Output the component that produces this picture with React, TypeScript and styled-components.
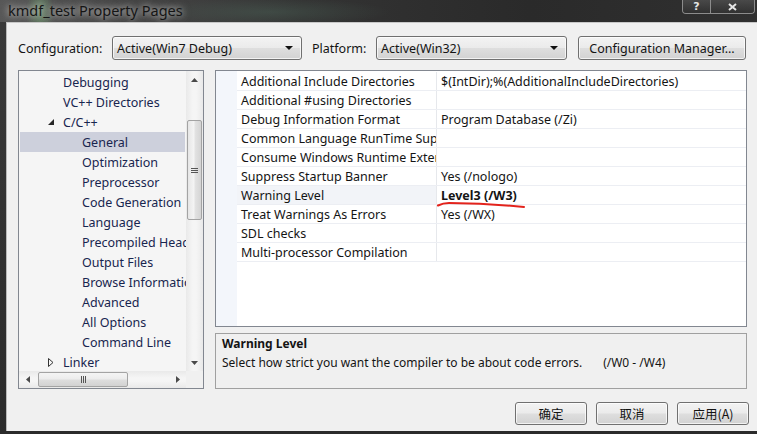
import styled, { createGlobalStyle } from "styled-components";

const GlobalStyle = createGlobalStyle`
  html, body {
    margin: 0;
    padding: 0;
    overflow: hidden;
    background: #2a2a2a;
  }
  body {
    font-family: "Noto Sans", "Noto Sans CJK SC", sans-serif;
    font-size: 12px;
  }
`;

const Window = styled.div`
  width: 757px;
  height: 434px;
  display: flex;
  flex-direction: column;
  background: linear-gradient(180deg, #3a3a3a, #2b2b2b);
  overflow: hidden;
`;

const TitleBar = styled.div`
  height: 22px;
  flex: none;
  display: flex;
  align-items: flex-start;
  justify-content: space-between;
  background:
    radial-gradient(ellipse 14px 30px at 40px 12px, rgba(120, 190, 120, 0.45), transparent),
    radial-gradient(ellipse 120px 14px at 270px 12px, rgba(80, 110, 95, 0.35), transparent),
    linear-gradient(90deg, #585858 0%, #454545 18%, #333 40%, #2a2a2a 70%, #303030 100%);
`;

const Title = styled.div`
  padding: 1px 0 0 8px;
  font-size: 14.5px;
  line-height: 19px;
  color: #151515;
  text-shadow: 0 0 6px rgba(220, 220, 220, 0.9), 0 0 10px rgba(200, 200, 200, 0.6);
`;

const CaptionButtons = styled.div`
  display: flex;
  margin-right: 2px;
  border: 1px solid #8c8c8c;
  border-top: none;
  border-radius: 0 0 4px 4px;
  overflow: hidden;
`;

const CaptionButton = styled.div<{ $w: number }>`
  width: ${({ $w }) => $w}px;
  height: 13px;
  display: flex;
  align-items: center;
  justify-content: center;
  background: linear-gradient(180deg, rgba(90, 90, 90, 0.6), rgba(50, 50, 50, 0.6));
  color: #e4e4e4;
  font-family: "DejaVu Sans", sans-serif;
  font-weight: bold;
  font-size: 11px;
  & + & {
    border-left: 1px solid #8c8c8c;
  }
`;

const Frame = styled.div`
  flex: 1;
  display: flex;
  padding: 0 0 3px 6px;
  min-height: 0;
`;

const Body = styled.div`
  flex: 1;
  display: flex;
  flex-direction: column;
  background: #f0f0f0;
  border-left: 1px solid #b9b9b9;
  border-top: 1px solid #c8c8c8;
  padding: 13px 8px 6px 11px;
  color: #141414;
`;

const TopRow = styled.div`
  height: 24px;
  display: flex;
  align-items: center;
`;

const FieldLabel = styled.div<{ $w: number; $ml?: number }>`
  width: ${({ $w }) => $w}px;
  margin-left: ${({ $ml }) => $ml ?? 0}px;
  font-size: 12.5px;
`;

const winButton = `
  border: 1px solid #707070;
  border-radius: 3px;
  background: linear-gradient(180deg, #f3f3f3 0%, #ebebeb 48%, #dedede 52%, #d2d2d2 100%);
  box-shadow: inset 0 0 0 1px rgba(255, 255, 255, 0.7);
  box-sizing: border-box;
  font-size: 12.5px;
  color: #141414;
  display: flex;
  align-items: center;
`;

const Select = styled.div<{ $w: number }>`
  ${winButton}
  width: ${({ $w }) => $w}px;
  height: 24px;
  padding: 0 8px 0 4px;
  justify-content: space-between;
`;

const Caret = styled.span`
  width: 0;
  height: 0;
  border-left: 4px solid transparent;
  border-right: 4px solid transparent;
  border-top: 4px solid #111;
`;

const PushButton = styled.div<{ $w: number; $h: number; $ml?: number }>`
  ${winButton}
  width: ${({ $w }) => $w}px;
  height: ${({ $h }) => $h}px;
  margin-left: ${({ $ml }) => $ml ?? 0}px;
  justify-content: center;
`;

const Main = styled.div`
  display: flex;
  gap: 11px;
  margin-top: 10px;
  height: 319px;
`;

const Tree = styled.div`
  width: 186px;
  box-sizing: border-box;
  border: 1px solid #828790;
  background: #f5f5f5;
  display: grid;
  grid-template-columns: 1fr 17px;
  grid-template-rows: 1fr 17px;
`;

const TreeList = styled.div`
  overflow: hidden;
  padding-top: 1px;
`;

const TreeRow = styled.div<{ $level: number; $selected?: boolean }>`
  height: 20px;
  margin: 0 1px;
  display: flex;
  align-items: center;
  padding-left: ${({ $level }) => 28 + ($level - 1) * 19}px;
  white-space: nowrap;
  font-size: 12.5px;
  color: #18254f;
  background: ${({ $selected }) => ($selected ? "#cdd0dc" : "transparent")};
`;

const Expander = styled.span`
  width: 15px;
  flex: none;
  display: flex;
  align-items: center;
`;

const VScroll = styled.div`
  display: flex;
  flex-direction: column;
  background: linear-gradient(90deg, #e9e9e9, #f5f5f5 40%, #f5f5f5 60%, #e9e9e9);
`;

const HScroll = styled.div`
  display: flex;
  background: linear-gradient(180deg, #e9e9e9, #f5f5f5 40%, #f5f5f5 60%, #e9e9e9);
`;

const ArrowButton = styled.div`
  width: 17px;
  height: 17px;
  flex: none;
  display: flex;
  align-items: center;
  justify-content: center;
`;

const Track = styled.div<{ $dir: "v" | "h" }>`
  flex: 1;
  display: flex;
  flex-direction: ${({ $dir }) => ($dir === "v" ? "column" : "row")};
`;

const Thumb = styled.div<{ $dir: "v" | "h"; $offset: number; $size: number }>`
  box-sizing: border-box;
  border: 1px solid #a3a3a3;
  border-radius: 2px;
  display: flex;
  align-items: center;
  justify-content: center;
  ${({ $dir, $offset, $size }) =>
    $dir === "v"
      ? `margin: ${$offset}px 1px 0; height: ${$size}px;
         background: linear-gradient(90deg, #e6e6e6, #f4f4f4 45%, #e2e2e2 55%, #d4d4d4);`
      : `margin: 1px 0 1px ${$offset}px; width: ${$size}px;
         background: linear-gradient(180deg, #f4f4f4, #ececec 45%, #dddddd 55%, #d2d2d2);`}
`;

const Corner = styled.div`
  background: #f0f0f0;
`;

const RightCol = styled.div`
  width: 532px;
  display: flex;
  flex-direction: column;
  gap: 6px;
`;

const PropGrid = styled.div`
  height: 257px;
  box-sizing: border-box;
  border: 1px solid #828790;
  background: #fff;
  display: flex;
`;

const GridMargin = styled.div`
  width: 21px;
  background: #f3f6fb;
`;

const GridRows = styled.div`
  flex: 1;
  padding-top: 1px;
`;

const GridRow = styled.div`
  height: 19px;
  box-sizing: border-box;
  border-bottom: 1px solid #eceef3;
  display: flex;
  font-size: 12.5px;
`;

const NameCell = styled.div<{ $active?: boolean }>`
  width: 200px;
  box-sizing: border-box;
  border-right: 1px solid #e6e8ec;
  padding-left: 4px;
  display: flex;
  align-items: center;
  white-space: nowrap;
  overflow: hidden;
  background: ${({ $active }) => ($active ? "#f2f4f8" : "transparent")};
`;

const ValueCell = styled.div<{ $bold?: boolean }>`
  position: relative;
  flex: 1;
  padding-left: 4px;
  display: flex;
  align-items: center;
  white-space: nowrap;
  font-weight: ${({ $bold }) => ($bold ? 700 : 400)};
`;

const Scribble = styled.svg`
  position: absolute;
  left: 0;
  top: 15px;
  overflow: visible;
`;

const Description = styled.div`
  height: 56px;
  box-sizing: border-box;
  border: 1px solid #a0a0a0;
  background: #f0f0f0;
  padding: 0 6px;
  font-size: 12px;
  line-height: 19px;
`;

const DescTitle = styled.div`
  font-weight: 700;
`;

const DescLine = styled.div`
  display: flex;
  gap: 21px;
`;

const Footer = styled.div`
  margin-top: 13px;
  display: flex;
  justify-content: flex-end;
  gap: 9px;
  font-family: "Noto Sans CJK SC", sans-serif;
`;

const treeItems: { label: string; level: number; expander?: "open" | "closed"; selected?: boolean }[] = [
  { label: "Debugging", level: 1 },
  { label: "VC++ Directories", level: 1 },
  { label: "C/C++", level: 1, expander: "open" },
  { label: "General", level: 2, selected: true },
  { label: "Optimization", level: 2 },
  { label: "Preprocessor", level: 2 },
  { label: "Code Generation", level: 2 },
  { label: "Language", level: 2 },
  { label: "Precompiled Headers", level: 2 },
  { label: "Output Files", level: 2 },
  { label: "Browse Information", level: 2 },
  { label: "Advanced", level: 2 },
  { label: "All Options", level: 2 },
  { label: "Command Line", level: 2 },
  { label: "Linker", level: 1, expander: "closed" },
];

const props: { name: string; value: string; active?: boolean }[] = [
  { name: "Additional Include Directories", value: "$(IntDir);%(AdditionalIncludeDirectories)" },
  { name: "Additional #using Directories", value: "" },
  { name: "Debug Information Format", value: "Program Database (/Zi)" },
  { name: "Common Language RunTime Support", value: "" },
  { name: "Consume Windows Runtime Extension", value: "" },
  { name: "Suppress Startup Banner", value: "Yes (/nologo)" },
  { name: "Warning Level", value: "Level3 (/W3)", active: true },
  { name: "Treat Warnings As Errors", value: "Yes (/WX)" },
  { name: "SDL checks", value: "" },
  { name: "Multi-processor Compilation", value: "" },
];

function Tri({ dir }: { dir: "up" | "down" | "left" | "right" }) {
  const pts = {
    up: "0,4 3.5,0 7,4",
    down: "0,0 3.5,4 7,0",
    left: "4,0 0,3.5 4,7",
    right: "0,0 4,3.5 0,7",
  }[dir];
  const vert = dir === "up" || dir === "down";
  return (
    <svg width={vert ? 7 : 4} height={vert ? 4 : 7}>
      <polygon points={pts} fill="#4a4a4a" />
    </svg>
  );
}

function ExpandIcon({ open }: { open: boolean }) {
  return open ? (
    <svg width="7" height="7">
      <polygon points="6,0 6,6 0,6" fill="#262626" />
    </svg>
  ) : (
    <svg width="6" height="9">
      <polygon points="0.5,0.5 5,4.5 0.5,8.5" fill="none" stroke="#333" strokeWidth="1" />
    </svg>
  );
}

function Grip({ dir }: { dir: "v" | "h" }) {
  return dir === "v" ? (
    <svg width="7" height="7">
      <path d="M0 1.5H7M0 3.5H7M0 5.5H7" stroke="#555" strokeWidth="1" />
    </svg>
  ) : (
    <svg width="7" height="7">
      <path d="M1.5 0V7M3.5 0V7M5.5 0V7" stroke="#555" strokeWidth="1" />
    </svg>
  );
}

export default function App() {
  return (
    <Window>
      <GlobalStyle />
      <TitleBar>
        <Title>kmdf_test Property Pages</Title>
        <CaptionButtons>
          <CaptionButton $w={27}>?</CaptionButton>
          <CaptionButton $w={43}>
            <svg width="9" height="8">
              <path d="M1 1L8 7M8 1L1 7" stroke="#e6e6e6" strokeWidth="2" />
            </svg>
          </CaptionButton>
        </CaptionButtons>
      </TitleBar>
      <Frame>
        <Body>
          <TopRow>
            <FieldLabel $w={94}>Configuration:</FieldLabel>
            <Select $w={190}>
              Active(Win7 Debug)
              <Caret />
            </Select>
            <FieldLabel $w={64} $ml={10}>
              Platform:
            </FieldLabel>
            <Select $w={191}>
              Active(Win32)
              <Caret />
            </Select>
            <PushButton $w={168} $h={24} $ml={11}>
              Configuration Manager...
            </PushButton>
          </TopRow>
          <Main>
            <Tree>
              <TreeList>
                {treeItems.map((it) => (
                  <TreeRow key={it.label} $level={it.level} $selected={it.selected}>
                    <Expander>{it.expander && <ExpandIcon open={it.expander === "open"} />}</Expander>
                    {it.label}
                  </TreeRow>
                ))}
              </TreeList>
              <VScroll>
                <ArrowButton>
                  <Tri dir="up" />
                </ArrowButton>
                <Track $dir="v">
                  <Thumb $dir="v" $offset={32} $size={100}>
                    <Grip dir="v" />
                  </Thumb>
                </Track>
                <ArrowButton>
                  <Tri dir="down" />
                </ArrowButton>
              </VScroll>
              <HScroll>
                <ArrowButton>
                  <Tri dir="left" />
                </ArrowButton>
                <Track $dir="h">
                  <Thumb $dir="h" $offset={2} $size={90}>
                    <Grip dir="h" />
                  </Thumb>
                </Track>
                <ArrowButton>
                  <Tri dir="right" />
                </ArrowButton>
              </HScroll>
              <Corner />
            </Tree>
            <RightCol>
              <PropGrid>
                <GridMargin />
                <GridRows>
                  {props.map((p) => (
                    <GridRow key={p.name}>
                      <NameCell $active={p.active}>{p.name}</NameCell>
                      <ValueCell $bold={p.active}>
                        {p.value}
                        {p.active && (
                          <Scribble width="90" height="8">
                            <path
                              d="M1 4.5Q6 2 12 2Q50 2 87 6"
                              fill="none"
                              stroke="#e3231c"
                              strokeWidth="2"
                              strokeLinecap="round"
                            />
                          </Scribble>
                        )}
                      </ValueCell>
                    </GridRow>
                  ))}
                </GridRows>
              </PropGrid>
              <Description>
                <DescTitle>Warning Level</DescTitle>
                <DescLine>
                  <span>Select how strict you want the compiler to be about code errors.</span>
                  <span>(/W0 - /W4)</span>
                </DescLine>
              </Description>
            </RightCol>
          </Main>
          <Footer>
            <PushButton $w={72} $h={23}>确定</PushButton>
            <PushButton $w={72} $h={23}>取消</PushButton>
            <PushButton $w={72} $h={23}>应用(A)</PushButton>
          </Footer>
        </Body>
      </Frame>
    </Window>
  );
}
